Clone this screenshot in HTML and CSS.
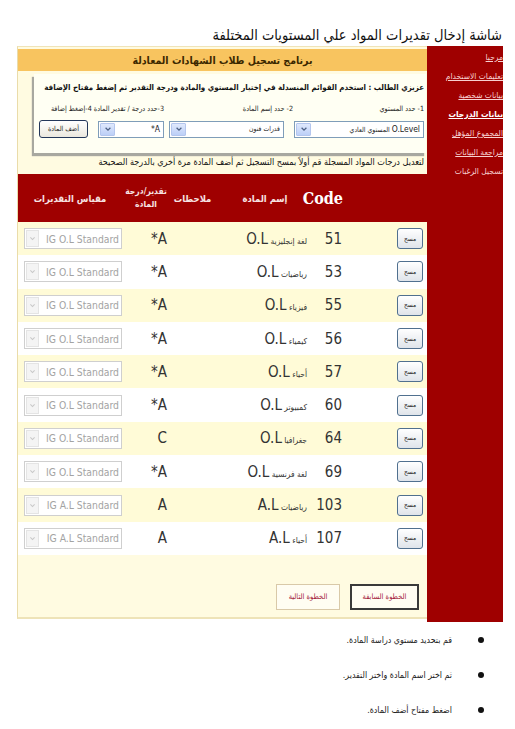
FILE: index.html
```html
<!DOCTYPE html>
<html lang="ar" dir="rtl">
<head>
<meta charset="utf-8">
<title>شاشة إدخال تقديرات المواد</title>
<link rel="stylesheet" href="styles.css">
</head>
<body>
<h1 class="page-title">شاشة إدخال تقديرات المواد علي المستويات المختلفة</h1>
<div class="frame">
  <nav class="sidebar">
    <a class="nav-link">مرحبا</a>
    <a class="nav-link">تعليمات الاستخدام</a>
    <a class="nav-link">بيانات شخصية</a>
    <a class="nav-link current">بيانات الدرجات</a>
    <a class="nav-link">المجموع المؤهل</a>
    <a class="nav-link">مراجعة البيانات</a>
    <span class="nav-link plain">تسجيل الرغبات</span>
  </nav>
  <main class="content">
    <div class="banner">برنامج تسجيل طلاب الشهادات المعادلة</div>
    <section class="panel">
      <div class="box">
        <p class="instr">عزيزي الطالب : استخدم القوائم المنسدلة في إختيار المستوي والمادة ودرجة التقدير ثم إضغط مفتاح الإضافة</p>
        <div class="labels">
          <span class="lbl lbl-level">1- حدد المستوي</span>
          <span class="lbl lbl-subject">2- حدد إسم المادة</span>
          <span class="lbl lbl-grade">3-حدد درجة / تقدير المادة 4-إضغط إضافة</span>
        </div>
        <div class="controls">
          <div class="combo combo-level"><span class="combo-text"><span class="latin">O.Level</span> المستوي العادي</span><span class="combo-btn"><svg viewBox="0 0 10 10" width="8" height="8"><path d="M2 3.5 L5 6.5 L8 3.5" fill="none" stroke="#4d6185" stroke-width="1.6"/></svg></span></div>
          <div class="combo combo-subject"><span class="combo-text">قدرات فنون</span><span class="combo-btn"><svg viewBox="0 0 10 10" width="8" height="8"><path d="M2 3.5 L5 6.5 L8 3.5" fill="none" stroke="#4d6185" stroke-width="1.6"/></svg></span></div>
          <div class="combo combo-grade"><span class="combo-text latin">A*</span><span class="combo-btn"><svg viewBox="0 0 10 10" width="8" height="8"><path d="M2 3.5 L5 6.5 L8 3.5" fill="none" stroke="#4d6185" stroke-width="1.6"/></svg></span></div>
          <button class="add-btn" type="button">أضف المادة</button>
        </div>
      </div>
      <p class="note">لتعديل درجات المواد المسجلة قم أولاً بمسح التسجيل ثم أضف المادة مرة أخري بالدرجة الصحيحة</p>
    </section>
    <table class="grades">
      <thead>
        <tr>
          <th class="c-del"></th>
          <th class="c-code code-head">Code</th>
          <th class="c-name">إسم المادة</th>
          <th class="c-notes">ملاحظات</th>
          <th class="c-grade grade-head">تقدير/درجة<br>المادة</th>
          <th class="c-scale">مقياس التقديرات</th>
        </tr>
      </thead>
      <tbody>
        <tr><td class="c-del"><button class="del-btn" type="button">مسح</button></td><td class="c-code">51</td><td class="c-name">لغة إنجليزية <span class="latin">O.L</span></td><td class="c-notes"></td><td class="c-grade">A*</td><td class="c-scale"><div class="dis-select"><span class="dis-text">IG O.L Standard</span><span class="dis-btn"><svg viewBox="0 0 10 10" width="7" height="7"><path d="M2 3.5 L5 6.5 L8 3.5" fill="none" stroke="#c8c8c8" stroke-width="1.5"/></svg></span></div></td></tr>
        <tr><td class="c-del"><button class="del-btn" type="button">مسح</button></td><td class="c-code">53</td><td class="c-name">رياضيات <span class="latin">O.L</span></td><td class="c-notes"></td><td class="c-grade">A*</td><td class="c-scale"><div class="dis-select"><span class="dis-text">IG O.L Standard</span><span class="dis-btn"><svg viewBox="0 0 10 10" width="7" height="7"><path d="M2 3.5 L5 6.5 L8 3.5" fill="none" stroke="#c8c8c8" stroke-width="1.5"/></svg></span></div></td></tr>
        <tr><td class="c-del"><button class="del-btn" type="button">مسح</button></td><td class="c-code">55</td><td class="c-name">فيزياء <span class="latin">O.L</span></td><td class="c-notes"></td><td class="c-grade">A*</td><td class="c-scale"><div class="dis-select"><span class="dis-text">IG O.L Standard</span><span class="dis-btn"><svg viewBox="0 0 10 10" width="7" height="7"><path d="M2 3.5 L5 6.5 L8 3.5" fill="none" stroke="#c8c8c8" stroke-width="1.5"/></svg></span></div></td></tr>
        <tr><td class="c-del"><button class="del-btn" type="button">مسح</button></td><td class="c-code">56</td><td class="c-name">كيمياء <span class="latin">O.L</span></td><td class="c-notes"></td><td class="c-grade">A*</td><td class="c-scale"><div class="dis-select"><span class="dis-text">IG O.L Standard</span><span class="dis-btn"><svg viewBox="0 0 10 10" width="7" height="7"><path d="M2 3.5 L5 6.5 L8 3.5" fill="none" stroke="#c8c8c8" stroke-width="1.5"/></svg></span></div></td></tr>
        <tr><td class="c-del"><button class="del-btn" type="button">مسح</button></td><td class="c-code">57</td><td class="c-name">أحياء <span class="latin">O.L</span></td><td class="c-notes"></td><td class="c-grade">A*</td><td class="c-scale"><div class="dis-select"><span class="dis-text">IG O.L Standard</span><span class="dis-btn"><svg viewBox="0 0 10 10" width="7" height="7"><path d="M2 3.5 L5 6.5 L8 3.5" fill="none" stroke="#c8c8c8" stroke-width="1.5"/></svg></span></div></td></tr>
        <tr><td class="c-del"><button class="del-btn" type="button">مسح</button></td><td class="c-code">60</td><td class="c-name">كمبيوتر <span class="latin">O.L</span></td><td class="c-notes"></td><td class="c-grade">A*</td><td class="c-scale"><div class="dis-select"><span class="dis-text">IG O.L Standard</span><span class="dis-btn"><svg viewBox="0 0 10 10" width="7" height="7"><path d="M2 3.5 L5 6.5 L8 3.5" fill="none" stroke="#c8c8c8" stroke-width="1.5"/></svg></span></div></td></tr>
        <tr><td class="c-del"><button class="del-btn" type="button">مسح</button></td><td class="c-code">64</td><td class="c-name">جغرافيا <span class="latin">O.L</span></td><td class="c-notes"></td><td class="c-grade">C</td><td class="c-scale"><div class="dis-select"><span class="dis-text">IG O.L Standard</span><span class="dis-btn"><svg viewBox="0 0 10 10" width="7" height="7"><path d="M2 3.5 L5 6.5 L8 3.5" fill="none" stroke="#c8c8c8" stroke-width="1.5"/></svg></span></div></td></tr>
        <tr><td class="c-del"><button class="del-btn" type="button">مسح</button></td><td class="c-code">69</td><td class="c-name">لغة فرنسية <span class="latin">O.L</span></td><td class="c-notes"></td><td class="c-grade">A*</td><td class="c-scale"><div class="dis-select"><span class="dis-text">IG O.L Standard</span><span class="dis-btn"><svg viewBox="0 0 10 10" width="7" height="7"><path d="M2 3.5 L5 6.5 L8 3.5" fill="none" stroke="#c8c8c8" stroke-width="1.5"/></svg></span></div></td></tr>
        <tr><td class="c-del"><button class="del-btn" type="button">مسح</button></td><td class="c-code">103</td><td class="c-name">رياضيات <span class="latin">A.L</span></td><td class="c-notes"></td><td class="c-grade">A</td><td class="c-scale"><div class="dis-select"><span class="dis-text">IG A.L Standard</span><span class="dis-btn"><svg viewBox="0 0 10 10" width="7" height="7"><path d="M2 3.5 L5 6.5 L8 3.5" fill="none" stroke="#c8c8c8" stroke-width="1.5"/></svg></span></div></td></tr>
        <tr><td class="c-del"><button class="del-btn" type="button">مسح</button></td><td class="c-code">107</td><td class="c-name">أحياء <span class="latin">A.L</span></td><td class="c-notes"></td><td class="c-grade">A</td><td class="c-scale"><div class="dis-select"><span class="dis-text">IG A.L Standard</span><span class="dis-btn"><svg viewBox="0 0 10 10" width="7" height="7"><path d="M2 3.5 L5 6.5 L8 3.5" fill="none" stroke="#c8c8c8" stroke-width="1.5"/></svg></span></div></td></tr>
      </tbody>
    </table>
    <div class="steps">
      <button class="step-btn step-prev" type="button">الخطوة السابقة</button>
      <button class="step-btn step-next" type="button">الخطوة التالية</button>
    </div>
  </main>
</div>
<ul class="bullets">
  <li class="bullet-item">قم بتحديد مستوي دراسة المادة.</li>
  <li class="bullet-item">ثم اختر اسم المادة واختر التقدير.</li>
  <li class="bullet-item">اضغط مفتاح أضف المادة.</li>
</ul>
</body>
</html>
```

FILE: styles.css
```css
* { box-sizing: border-box; }

body {
  margin: 0;
  width: 515px;
  background: #ffffff;
  color: #000;
  font-family: "DejaVu Sans Condensed", "DejaVu Sans", sans-serif;
  direction: rtl;
}

.latin {
  font-family: "Liberation Sans Narrow", "DejaVu Sans Condensed", sans-serif;
}

.page-title {
  margin: 0;
  padding: 26px 13px 0 0;
  font-size: 14.5px;
  font-weight: normal;
  line-height: 18px;
  text-align: right;
  color: #111;
}

.frame {
  display: flex;
  margin: 2px 12px 0 17px;
  width: 486px;
}

.sidebar {
  width: 76px;
  flex: none;
  background: #9f0000;
  padding-top: 2px;
  display: flex;
  flex-direction: column;
  align-items: flex-start;
  min-height: 576px;
  overflow: hidden;
}

.nav-link {
  font-size: 8.4px;
  line-height: 19px;
  color: #f7d0d0;
  text-decoration: underline;
  white-space: nowrap;
}

.nav-link.current {
  color: #ffffff;
  font-weight: bold;
}

.nav-link.plain {
  text-decoration: none;
}

.content {
  width: 410px;
  flex: none;
  background: #fffbe1;
  border-left: 1px solid #eadcaa;
  border-bottom: 2px solid #eee3b8;
  border-top: 1px solid #f0e4b8;
  display: flex;
  flex-direction: column;
  height: 573px;
}

.banner {
  margin-top: 2px;
  height: 22px;
  line-height: 22px;
  background: #f8c45f;
  text-align: center;
  font-size: 10.5px;
  font-weight: bold;
  color: #3b2800;
}

.panel {
  padding: 3px 1px 0 16px;
}

.box {
  background: #fffff3;
  box-shadow: -2px 3px 1px #a8a8a0;
  padding: 5px 2px 11px 2px;
  height: 79px;
  overflow: hidden;
}

.instr {
  margin: 0;
  font-size: 7.9px;
  font-weight: bold;
  line-height: 18px;
  white-space: nowrap;
  color: #111;
}

.labels {
  display: flex;
  margin-top: 6px;
  font-size: 7.2px;
  line-height: 12px;
  color: #222;
}

.lbl { white-space: nowrap; }
.lbl-level { width: 131px; }
.lbl-subject { width: 129px; }

.controls {
  display: flex;
  align-items: center;
  margin-top: 5px;
}

.combo {
  height: 17px;
  border: 1px solid #7f9db9;
  background: #ffffff;
  display: flex;
  align-items: center;
  justify-content: space-between;
  padding: 0 3px 0 1px;
}

.combo-level { width: 130px; margin-left: 10px; }
.combo-subject { width: 115px; margin-left: 5px; }
.combo-grade { width: 66px; margin-left: 10px; }

.combo-text {
  font-size: 6.8px;
  color: #222;
  white-space: nowrap;
}

.combo-text .latin, .combo-text.latin {
  font-size: 8.5px;
}

.combo-btn {
  width: 15px;
  height: 13px;
  background: linear-gradient(#e0e9fd, #bccff7);
  border: 1px solid #b4c6ee;
  border-radius: 1px;
  display: flex;
  align-items: center;
  justify-content: center;
}

.add-btn {
  width: 49px;
  height: 18px;
  padding: 0;
  border: 1px solid #23375a;
  border-radius: 3px;
  background: linear-gradient(#ffffff, #ebe8de);
  font-family: "DejaVu Sans Condensed", "DejaVu Sans", sans-serif;
  font-size: 7px;
  color: #222;
}

.note {
  margin: 3px 2px 6px 0;
  font-size: 9px;
  line-height: 12px;
  white-space: nowrap;
  color: #111;
}

.grades {
  border-collapse: collapse;
  width: 409px;
  table-layout: fixed;
}

.grades th {
  background: #9f0000;
  color: #f7e3e3;
  height: 48px;
  font-size: 9.4px;
  font-weight: bold;
  line-height: 13px;
  padding: 0;
  text-align: center;
}

.grades th.grade-head {
  font-size: 8.5px;
  white-space: nowrap;
}

.grades th.code-head {
  font-family: "DejaVu Serif Condensed", "Liberation Serif", serif;
  font-size: 16px;
  color: #ffffff;
  text-align: right;
  padding-right: 47px;
}

.grades td {
  height: 33.3px;
  padding: 0;
  font-size: 14px;
  color: #333;
}

.grades tbody tr:nth-child(odd) td { background: #fffbd7; }
.grades tbody tr:nth-child(even) td { background: #ffffff; }

.c-del { width: 37px; text-align: right; }
.c-code { width: 75px; }
.c-name { width: 100px; }
.c-notes { width: 45px; }
.c-grade { width: 48px; }
.c-scale { width: 104px; }

.grades td.c-del { padding-right: 4px; }

.grades td.c-code {
  font-family: "Liberation Sans Narrow", "DejaVu Sans Condensed", sans-serif;
  font-size: 15px;
  text-align: right;
  padding-right: 48px;
}

.grades td.c-name {
  font-size: 8.4px;
  text-align: right;
  padding-right: 8px;
  white-space: nowrap;
}

.grades td.c-name .latin {
  font-size: 15px;
}

.grades td.c-grade {
  font-family: "Liberation Sans Narrow", "DejaVu Sans Condensed", sans-serif;
  font-size: 15px;
  text-align: right;
  padding-right: 3px;
}

.grades td.c-scale {
  padding-left: 3px;
}

.del-btn {
  width: 26px;
  height: 21px;
  padding: 0;
  border: 1px solid #50708f;
  border-radius: 3px;
  background: linear-gradient(#ffffff, #dfe4ea);
  font-family: "DejaVu Sans Condensed", "DejaVu Sans", sans-serif;
  font-size: 6.5px;
  color: #222;
  vertical-align: middle;
}

.dis-select {
  width: 98px;
  height: 21px;
  border: 1px solid #cfcfcf;
  background: #ffffff;
  display: flex;
  align-items: center;
  justify-content: space-between;
  padding: 0 2px 0 1px;
  overflow: hidden;
}

.dis-text {
  font-family: "Liberation Sans Narrow", "DejaVu Sans Condensed", sans-serif;
  font-size: 10.3px;
  color: #a3a3a3;
  direction: ltr;
  white-space: nowrap;
}

.dis-btn {
  width: 13px;
  height: 17px;
  background: #f4f4f4;
  border: 1px solid #e4e4e4;
  display: flex;
  align-items: center;
  justify-content: center;
}

.steps {
  display: flex;
  gap: 10px;
  padding: 29px 8px 0 0;
}

.step-btn {
  height: 26px;
  padding: 0;
  font-family: "DejaVu Sans Condensed", "DejaVu Sans", sans-serif;
  font-size: 7.5px;
  color: #a3213c;
  background: #fffdf2;
}

.step-prev {
  width: 69px;
  border: 2px solid #3a3a3a;
}

.step-next {
  width: 64px;
  border: 1px solid #d9c9a8;
}

.bullets {
  list-style: none;
  margin: 0;
  padding: 0 31px 0 0;
}

.bullet-item {
  display: flex;
  align-items: center;
  gap: 26px;
  height: 35px;
  font-size: 8.8px;
  color: #222;
}

.bullet-item::before {
  content: "";
  width: 6px;
  height: 6px;
  border-radius: 50%;
  background: #111;
  flex: none;
}
```
